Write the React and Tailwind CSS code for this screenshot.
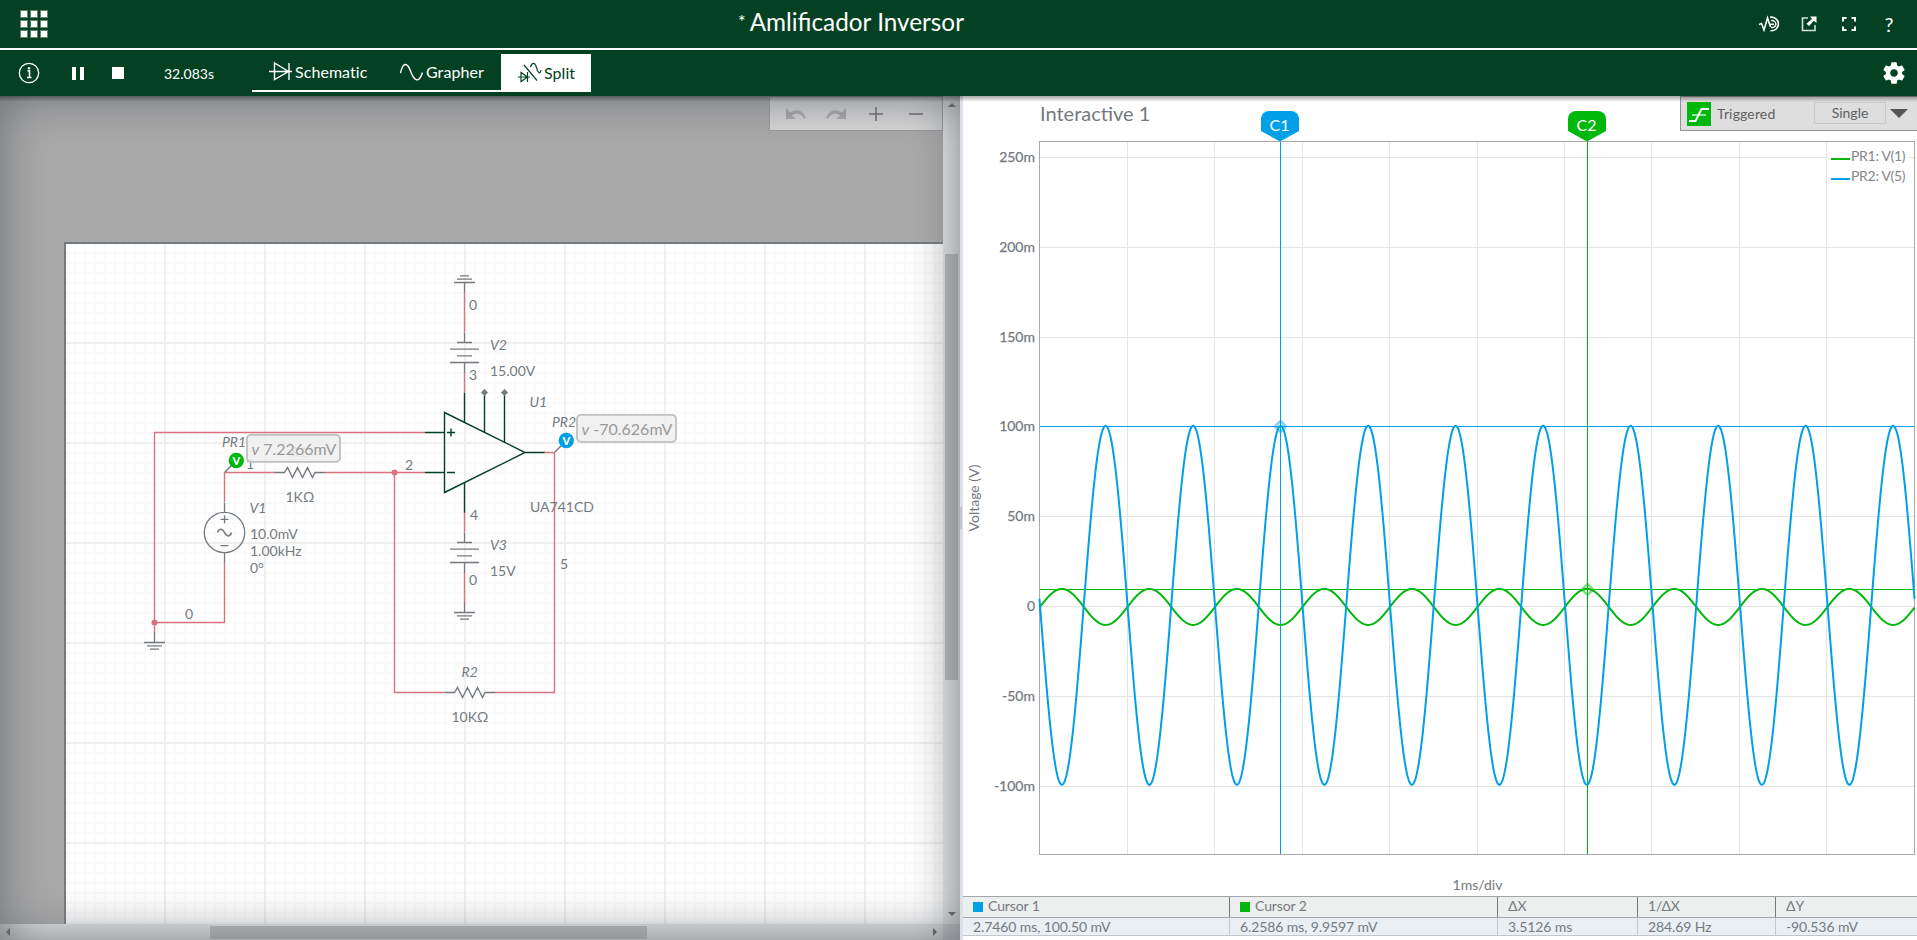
import React from "react";

const RED = "#d9737f";
const GRAY = "#757a80";
const GREEN = "#044123";
const TRACE_BLUE = "#00a0e9";
const TRACE_GREEN = "#00b80c";

const zigzag = (x, y) =>
  `M${x} ${y}h10l3 -5l5 10l5 -10l5 10l5 -10l5 10l2.5 -5h10`;

function Ground({ x, y, flip = 1 }) {
  return (
    <path
      d={`M${x - 10.5} ${y}h21M${x - 7.5} ${y + 3.4 * flip}h15M${x - 4.5} ${y + 6.6 * flip}h9M${x} ${y}v${-10 * flip}`}
      stroke={GRAY}
      strokeWidth="1.3"
    />
  );
}

function Battery({ x, y }) {
  return (
    <path
      d={`M${x} ${y}v10M${x - 7.5} ${y + 10}h15M${x - 14.5} ${y + 16.7}h29M${x - 7.5} ${y + 23.3}h15M${x - 14.5} ${y + 30}h29M${x} ${y + 30}v10`}
      stroke={GRAY}
      strokeWidth="1.3"
    />
  );
}

function Probe({ x, y, color, tx, ty }) {
  return (
    <g>
      <path d={`M${tx} ${ty}L${x} ${y}`} stroke={GRAY} strokeWidth="1.5" />
      <circle cx={x} cy={y} r="7.7" fill={color} />
      <text x={x} y={y + 4} textAnchor="middle" fontSize="11" fontWeight="900" fill="#fff">V</text>
    </g>
  );
}

function Schematic() {
  return (
    <svg className="block h-[828px] w-[943px] bg-[#a9a9a9]" viewBox="0 96 943 828" fill="none" fontFamily="Lato, sans-serif">
      <defs>
        <pattern id="minor" x="70" y="248" width="10" height="10" patternUnits="userSpaceOnUse">
          <path d="M5 0V10M0 5H10" stroke="#fafafa" strokeWidth="2" />
        </pattern>
        <pattern id="major" x="115" y="293" width="100" height="100" patternUnits="userSpaceOnUse">
          <path d="M50 0V100M0 50H100" stroke="#efefef" strokeWidth="2" />
        </pattern>
      </defs>
      <rect x="65" y="243" width="900" height="700" fill="#fff" />
      <rect x="65" y="243" width="900" height="700" fill="url(#minor)" />
      <rect x="65" y="243" width="900" height="700" fill="url(#major)" stroke={GRAY} strokeWidth="2" />

      <g stroke={RED} strokeWidth="1.4">
        <path d="M425 432.5H154.5V633M154.5 622.5H224.5V562M224.5 502V472.5H275M325 472.5H425M394.5 472.5V692.5H444.5M494.5 692.5H554.5V452.5H544" />
        <path d="M464.5 292V332M464.5 372V392M464.5 512V532M464.5 572V603" />
      </g>
      <circle cx="154.5" cy="622.5" r="3" fill={RED} />
      <circle cx="394.5" cy="472.5" r="3" fill={RED} />

      <Ground x={154.5} y={642.5} />
      <Ground x={464.5} y={612.5} />
      <Ground x={464.5} y={282.5} flip={-1} />
      <Battery x={464.5} y={332.5} />
      <Battery x={464.5} y={532.5} />
      <path d={zigzag(274.5, 472.5)} stroke={GRAY} strokeWidth="1.4" />
      <path d={zigzag(444.5, 692.5)} stroke={GRAY} strokeWidth="1.4" />

      <g stroke={GRAY} strokeWidth="1.3">
        <circle cx="224.5" cy="532.5" r="20.2" />
        <path d="M224.5 502.5v10M224.5 552.5v10M220.5 519.3h8M224.5 515.3v8M220.5 545.7h8" />
        <path d="M217.5 532.5c1.5 -4.5 5 -4.5 7 0s5.5 4.5 7 0" strokeWidth="1.5" />
      </g>

      <g stroke={GREEN} strokeWidth="1.4">
        <path d="M444.5 412.5L525 452.5L444.5 492.5ZM425 432.5h19.5M425 472.5h19.5M525 452.5h19.5" />
        <path d="M464.5 392.5V422.5M484.5 392.5V432.5M504.5 392.5V442.5M464.5 482.5V512.5" />
        <path d="M447 432.5h8M451 428.5v8M447 472.5h8" />
      </g>
      <path d="M484.5 389l3.5 3.5l-3.5 3.5l-3.5 -3.5ZM504.5 389l3.5 3.5l-3.5 3.5l-3.5 -3.5Z" fill={GRAY} />

      <g fill={GRAY} fontSize="14">
        <text x="469" y="310">0</text>
        <text x="469" y="380">3</text>
        <text x="470" y="520">4</text>
        <text x="469" y="585">0</text>
        <text x="560" y="569">5</text>
        <text x="405" y="470">2</text>
        <text x="246" y="469">1</text>
        <text x="185" y="619">0</text>
        <text x="490" y="376">15.00V</text>
        <text x="490" y="576">15V</text>
        <text x="530" y="512">UA741CD</text>
        <text x="285.5" y="502">1KΩ</text>
        <text x="451.5" y="722">10KΩ</text>
        <text x="250" y="539">10.0mV</text>
        <text x="250" y="556">1.00kHz</text>
        <text x="250" y="573">0°</text>
        <g fontStyle="italic">
          <text x="490" y="350">V2</text>
          <text x="490" y="550">V3</text>
          <text x="529.5" y="407">U1</text>
          <text x="461.5" y="677">R2</text>
          <text x="249.5" y="513">V1</text>
          <text x="222" y="447">PR1</text>
          <text x="552" y="427">PR2</text>
          <text x="291" y="457">R1</text>
        </g>
      </g>

      <Probe x={236.3} y={460.5} tx={225} ty={472} color={TRACE_GREEN} />
      <Probe x={566.3} y={440.5} tx={555} ty={452} color={TRACE_BLUE} />

      <g fontSize="16" fill="#999">
        <rect x="247" y="434.8" width="93" height="27" rx="4" fill="#efefef" fillOpacity=".88" stroke="#c0c0c0" strokeWidth="1.8" />
        <text x="251.5" y="455"><tspan fontStyle="italic">v</tspan> 7.2266mV</text>
        <rect x="577" y="414.8" width="99" height="27" rx="4" fill="#efefef" fillOpacity=".88" stroke="#c0c0c0" strokeWidth="1.8" />
        <text x="581.5" y="435"><tspan fontStyle="italic">v</tspan> -70.626mV</text>
      </g>
    </svg>
  );
}

const X0 = 1039.5;
const X1 = 1914.5;
const DIV = 87.5;
const sine = (amp, cy, sign) => {
  let d = "";
  for (let x = X0; x <= X1; x += 1) {
    const y = cy + sign * amp * Math.sin(((x - X0 - 0.5) / DIV) * 2 * Math.PI);
    d += `${d ? "L" : "M"}${x} ${y.toFixed(2)}`;
  }
  return d;
};

const levels = [
  ["250m", 157.5], ["200m", 247.5], ["150m", 337.5], ["100m", 426.5], ["50m", 516.5],
  ["0", 606.5], ["-50m", 696.5], ["-100m", 786.5],
];
const columns = [1127.5, 1214.5, 1302.5, 1389.5, 1477.5, 1564.5, 1651.5, 1739.5, 1826.5];

function Flag({ x, color, label }) {
  return (
    <g>
      <path d={`M${x - 19} 131V119a8 8 0 0 1 8 -8h22a8 8 0 0 1 8 8V131L${x} 141.5Z`} fill={color} />
      <text x={x - 0.5} y="131" textAnchor="middle" fontSize="16" fill="#fff">{label}</text>
    </g>
  );
}

function Chart() {
  return (
    <svg className="block h-[800px] w-[954px]" viewBox="963 96 954 800" fill="none" fontFamily="Lato, sans-serif">
      <g stroke="#e4e4e4">
        {levels.map(([l, y]) => <path key={l} d={`M1040 ${y}H1914`} />)}
        {columns.map((x) => <path key={x} d={`M${x} 142V854`} />)}
      </g>
      <rect x="1829" y="148" width="79" height="38" fill="#fff" />
      <rect x={X0} y="141.5" width="875" height="713" stroke="#a9a9a9" />
      <g fill={GRAY} stroke={GRAY} strokeWidth=".25" fontSize="14" textAnchor="end">
        {levels.map(([l, y]) => <text key={l} x="1035" y={y + 4.5}>{l}</text>)}
      </g>
      <text x="1040" y="120.5" fontSize="20" fill={GRAY}>Interactive 1</text>
      <text transform="translate(979 498) rotate(-90)" textAnchor="middle" fontSize="14" fill={GRAY}>Voltage (V)</text>
      <text x="1477.5" y="890" textAnchor="middle" fontSize="14" fill={GRAY}>1ms/div</text>

      <path d="M1280.5 142V854M1040 426.5H1914" stroke={TRACE_BLUE} shapeRendering="crispEdges" />
      <path d="M1587.5 142V854M1040 589.5H1914" stroke={TRACE_GREEN} shapeRendering="crispEdges" />
      <path d={sine(18, 606.9, -1)} stroke={TRACE_GREEN} strokeWidth="2" />
      <path d={sine(179.5, 605.3, 1)} stroke={TRACE_BLUE} strokeWidth="2" />
      <path d="M1280.5 421l5.5 5.5l-5.5 5.5l-5.5 -5.5Z" stroke={TRACE_BLUE} strokeWidth="2.5" opacity=".5" />
      <path d="M1587.5 584l5.5 5.5l-5.5 5.5l-5.5 -5.5Z" stroke={TRACE_GREEN} strokeWidth="2.5" opacity=".5" />
      <Flag x={1280} color={TRACE_BLUE} label="C1" />
      <Flag x={1587} color={TRACE_GREEN} label="C2" />

      <path d="M1831 159H1850" stroke={TRACE_GREEN} strokeWidth="2" />
      <path d="M1831 179H1850" stroke={TRACE_BLUE} strokeWidth="2" />
      <g fontSize="14" fill="#84878b" letterSpacing="-.3">
        <text x="1851" y="161">PR1: V(1)</text>
        <text x="1851" y="181">PR2: V(5)</text>
      </g>
    </svg>
  );
}

function Header() {
  return (
    <header className="grid h-[50px] grid-cols-[738px_auto_1fr] items-center border-b-2 border-white bg-[#044123] text-white">
      <div className="ml-[20px] grid w-[28px] grid-cols-3 gap-[2px]">
        {Array.from({ length: 9 }, (_, i) => (
          <span key={i} className="h-[8px] w-[8px] border border-[#5f8672] bg-white" />
        ))}
      </div>
      <h1 className="flex items-start pb-[4px] text-[24.3px] leading-[28px]">
        <span className="mr-[4px] text-[18px] leading-[26px]">*</span>Amlificador Inversor
      </h1>
      <div className="flex items-center justify-end pr-[22px]">
        <svg className="h-[18px] w-[23px]" viewBox="0 0 23 18" fill="none" stroke="#fff" strokeWidth="1.6">
          <path d="M0 9.5L2.5 8.5L5 15L8.5 3L11.5 12" />
          <path d="M11 2.3A7 6.8 0 1 1 11.5 15.7" />
          <path d="M12 5.7A3.8 3.5 0 1 1 12 12.4M10.5 9.2H15" strokeWidth="1.4" />
        </svg>
        <svg className="ml-[19px] h-[16px] w-[16px]" viewBox="0 0 16 16" fill="none">
          <path d="M7 2H1.5V14.5H14V9" stroke="#d6e0da" strokeWidth="1.6" />
          <path d="M9 .5h6.5V7L13 4.800L8 10L5.500 7.800L11 2.800Z" fill="#fff" />
        </svg>
        <svg className="ml-[25px] h-[14px] w-[14px]" viewBox="0 0 14 14" fill="none" stroke="#fff" strokeWidth="2">
          <path d="M1 4.500V1H4.500M9.500 1H13V4.500M13 9.500V13H9.500M4.500 13H1V9.500" />
        </svg>
        <span className="ml-[27px] w-[12px] text-center text-[20px] leading-[20px]">?</span>
      </div>
    </header>
  );
}

function Toolbar() {
  return (
    <div className="flex h-[46px] items-center bg-[#044123] text-white">
      <svg className="ml-[18px] h-[22px] w-[22px]" viewBox="0 0 22 22" fill="none">
        <circle cx="11" cy="11" r="9.7" stroke="#fff" strokeWidth="1.3" />
        <path d="M9.500 8.800h2v7M9 15.500h4.500" stroke="#fff" strokeWidth="1.600" />
        <circle cx="11" cy="6.300" r="1.200" fill="#fff" />
      </svg>
      <div className="ml-[32px] flex gap-[4px]">
        <span className="h-[13px] w-[4px] bg-white" />
        <span className="h-[13px] w-[4px] bg-white" />
      </div>
      <span className="ml-[28px] h-[12px] w-[12px] bg-white" />
      <span className="ml-[40px] w-[88px] pt-px text-[14px]">32.083s</span>
      <nav className="flex h-[38px] text-[16px] tracking-[0.06px]">
        <div className="flex w-[249px] border-b-2 border-white">
          <span className="ml-[17px] flex w-[131px] items-center">
            <svg className="h-[22px] w-[23px]" viewBox="0 0 23 22" fill="none" stroke="#fff" strokeWidth="1.400">
              <path d="M0 10.500H23M5.500 2V18.500L19.500 10.500ZM20 2V19" />
            </svg>
            <span className="ml-[3px]">Schematic</span>
          </span>
          <span className="flex items-center">
            <svg className="h-[22px] w-[23px]" viewBox="0 0 23 22" fill="none" stroke="#fff" strokeWidth="1.400">
              <path d="M.5 12C3 .5 7.500 1.500 10.500 10S18.500 24 22.500 11.500" />
            </svg>
            <span className="ml-[3px]">Grapher</span>
          </span>
        </div>
        <div className="flex w-[90px] items-center bg-white pl-[17px] text-[#044123]">
          <svg className="h-[22px] w-[24px]" viewBox="0 0 24 22" fill="none" stroke="#044123" strokeWidth="1.200">
            <path d="M0 15H12M3 10.500V19.500L9.500 15ZM9.500 10V20M6 3L19 18.500" />
            <path d="M12.500 5C14 0 17 0 18.500 5.500S22 13 23 8" />
          </svg>
          <span className="ml-[2px]">Split</span>
        </div>
      </nav>
      <svg className="ml-auto mr-[10px] h-[26px] w-[26px]" viewBox="0 0 24 24" fill="#fff">
        <path d="M19.430 12.980c.04-.32.07-.64.07-.98s-.03-.66-.07-.98l2.110-1.650c.19-.15.24-.42.12-.64l-2-3.460c-.12-.22-.39-.3-.61-.22l-2.490 1c-.52-.4-1.080-.73-1.690-.98l-.38-2.650C14.460 2.180 14.250 2 14 2h-4c-.25 0-.46.18-.49.42l-.38 2.650c-.61.25-1.170.59-1.690.98l-2.490-1c-.23-.09-.49 0-.61.22l-2 3.460c-.13.22-.07.49.12.64l2.110 1.650c-.04.32-.07.65-.07.98s.03.66.07.98l-2.110 1.650c-.19.15-.24.42-.12.64l2 3.460c.12.22.39.3.61.22l2.490-1c.52.4 1.080.73 1.690.98l.38 2.650c.03.24.24.42.49.42h4c.25 0 .46-.18.49-.42l.38-2.650c.61-.25 1.170-.59 1.690-.98l2.490 1c.23.09.49 0 .61-.22l2-3.460c.12-.22.07-.49-.12-.64l-2.110-1.650zM12 15.500c-1.930 0-3.500-1.570-3.500-3.500s1.570-3.500 3.500-3.500 3.500 1.570 3.500 3.500-1.570 3.500-3.500 3.500z" />
      </svg>
    </div>
  );
}

function LeftPane() {
  return (
    <section className="relative grid h-[844px] w-[960px] grid-cols-[943px_17px] grid-rows-[828px_16px] overflow-hidden">
      <Schematic />
      <div className="flex flex-col items-center justify-between bg-[#eee] pb-[8px] pt-[7px]">
        <svg className="h-[4px] w-[8px]" viewBox="0 0 8 4"><path d="M4 0L8 4H0Z" fill="#555" /></svg>
        <svg className="h-[4px] w-[8px]" viewBox="0 0 8 4"><path d="M4 4L8 0H0Z" fill="#555" /></svg>
      </div>
      <div className="flex items-center justify-between bg-[#e8e8e8] pl-[6px] pr-[6px]">
        <svg className="h-[8px] w-[4px]" viewBox="0 0 4 8"><path d="M0 4L4 0V8Z" fill="#555" /></svg>
        <svg className="h-[8px] w-[4px]" viewBox="0 0 4 8"><path d="M4 4L0 0V8Z" fill="#555" /></svg>
      </div>
      <div className="bg-[#d0d3d4]" />
      <div className="absolute left-[945px] top-[158px] h-[426px] w-[13px] bg-[#bcbcbc]" />
      <div className="absolute left-[210px] top-[830px] h-[13px] w-[437px] bg-[#bcbcbc]" />
      <div className="absolute right-[17px] top-0 flex h-[35px] w-[174px] items-center border border-[#999] bg-[#d8d8d8] pl-[16px]">
        <svg className="h-[12px] w-[20px]" viewBox="0 0 20 12" fill="none">
          <path d="M0 0V11H10L6 7.500C10 4 15 5 18 11L20 10C17 2 10 0 4 4.500Z" fill="#a9a9a9" />
        </svg>
        <svg className="ml-[20px] h-[12px] w-[20px]" viewBox="0 0 20 12" fill="none">
          <path d="M20 0V11H10L14 7.500C10 4 5 5 2 11L0 10C3 2 10 0 16 4.500Z" fill="#a9a9a9" />
        </svg>
        <svg className="ml-[23px] h-[14px] w-[14px]" viewBox="0 0 14 14" stroke="#6c6c6c" strokeWidth="1.600"><path d="M7 0V14M0 7H14" /></svg>
        <svg className="ml-[26px] h-[14px] w-[14px]" viewBox="0 0 14 14" stroke="#6c6c6c" strokeWidth="1.600"><path d="M0 7H14" /></svg>
      </div>
      <div className="pointer-events-none absolute inset-0 shadow-[inset_0_0_50px_#6c6f75]" />
    </section>
  );
}

function TriggerBar() {
  return (
    <div className="absolute right-0 top-0 flex h-[35px] w-[237px] items-center border border-r-0 border-[#929292] bg-[#dedede] text-[14px] text-[#606060]">
      <svg className="ml-[6px] h-[24px] w-[24px] bg-[#00b80c]" viewBox="0 0 24 24" fill="none" stroke="#fff">
        <path d="M2 19H8.500L14.500 7H22" strokeWidth="2" />
        <path d="M5 13H19" strokeWidth="1.200" />
      </svg>
      <span className="ml-[6px] w-[97px] tracking-[0.15px]">Triggered</span>
      <span className="mb-[2px] flex h-[22px] w-[72px] items-center justify-center border border-[#c8c8c8]">Single</span>
      <svg className="ml-[4px] h-[9px] w-[18px]" viewBox="0 0 18 9"><path d="M0 0H18L9 9Z" fill="#555" /></svg>
    </div>
  );
}

const readout = [
  ["Cursor 1", "2.7460 ms, 100.50 mV", "bg-[#00a0e9]"],
  ["Cursor 2", "6.2586 ms, 9.9597 mV", "bg-[#00b80c]"],
  ["ΔX", "3.5126 ms"],
  ["1/ΔX", "284.69 Hz"],
  ["ΔY", "-90.536 mV"],
];

function Readout() {
  return (
    <div className="grid grid-cols-[267px_268px_140px_138px_141px] text-[14px] tracking-[-0.1px] text-[#757a80]">
      {readout.map(([name, value, swatch], i) => (
        <div key={name}>
          <div className="flex h-[22px] items-center border-y border-[#a4a7aa] bg-[#edefee] pl-[10px]">
            {swatch && <span className={`mr-[5px] h-[10px] w-[10px] ${swatch}`} />}
            <span className="grow pb-[2px] leading-[18px]">{name}</span>
            {i < 4 && <span className="h-[20px] w-px bg-[#757a80]" />}
          </div>
          <div className="flex h-[18px] items-center border-b border-[#c3c7ca] bg-[#e9eff3] pl-[10px]">
            <span className="grow whitespace-nowrap leading-[17px]">{value}</span>
            {i < 4 && <span className="h-[17px] w-px bg-[#c3c7ca]" />}
          </div>
        </div>
      ))}
    </div>
  );
}

export default function App() {
  return (
    <div className="h-[940px] w-[1917px] overflow-hidden bg-white font-['Lato',sans-serif]">
      <Header />
      <Toolbar />
      <main className="relative flex h-[844px]">
        <LeftPane />
        <div className="flex w-[3px] items-center bg-[#dbe1e6]">
          <span className="h-[22px] w-[2px] bg-[#c3c9ce]" />
        </div>
        <section className="relative w-[954px]">
          <Chart />
          <TriggerBar />
          <Readout />
        </section>
        <div className="pointer-events-none absolute inset-x-0 top-0 h-[6px] bg-linear-to-b from-black/35 to-transparent" />
      </main>
    </div>
  );
}
